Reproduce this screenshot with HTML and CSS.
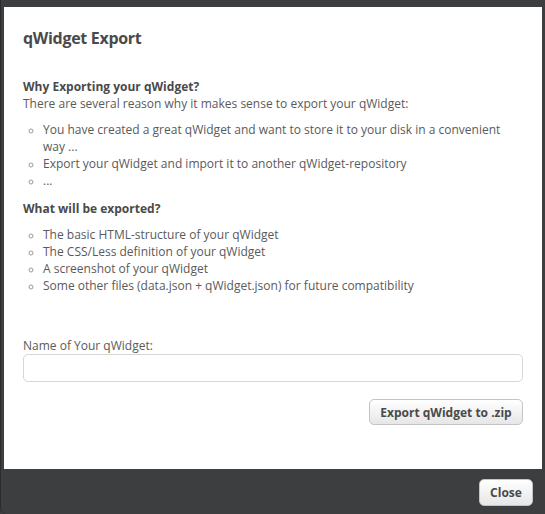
FILE: index.html
```html
<!DOCTYPE html>
<html>
<head>
<meta charset="utf-8">
<link rel="stylesheet" href="styles.css">
</head>
<body>
<div class="frame">
  <div class="modal">
    <h1 class="title">qWidget Export</h1>
    <h2 class="sub">Why Exporting your qWidget?</h2>
    <p class="text">There are several reason why it makes sense to export your qWidget:</p>
    <ul class="list">
      <li>You have created a great qWidget and want to store it to your disk in a convenient way ...</li>
      <li>Export your qWidget and import it to another qWidget-repository</li>
      <li>...</li>
    </ul>
    <h2 class="sub">What will be exported?</h2>
    <ul class="list">
      <li>The basic HTML-structure of your qWidget</li>
      <li>The CSS/Less definition of your qWidget</li>
      <li>A screenshot of your qWidget</li>
      <li>Some other files (data.json + qWidget.json) for future compatibility</li>
    </ul>
    <label class="label">Name of Your qWidget:</label>
    <input class="input" type="text">
    <div class="actions">
      <button class="btn btn-export">Export qWidget to .zip</button>
    </div>
  </div>
  <div class="footer">
    <button class="btn btn-close">Close</button>
  </div>
</div>
</body>
</html>
```
FILE: styles.css
```css
html, body {
  margin: 0;
  padding: 0;
  background: #3d3e40;
}
body {
  font-family: "Open Sans", "Liberation Sans", sans-serif;
  color: #5a5a5a;
}
.frame {
  width: 545px;
  height: 514px;
  box-sizing: border-box;
  padding: 7px 3px 0 3px;
  display: flex;
  flex-direction: column;
  border-left: 1px solid #2b2c2e;
  border-bottom-left-radius: 6px;
}
.modal {
  background: #fff;
  height: 462px;
  box-sizing: border-box;
  padding: 21px 19px 0 19px;
}
.title {
  margin: 0 0 31px 0;
  font-size: 16px;
  font-weight: 700;
  color: #4a4a4a;
  line-height: 20px;
  letter-spacing: -0.3px;
}
.sub {
  margin: 0;
  font-size: 12px;
  font-weight: 700;
  color: #4a4a4a;
  line-height: 16px;
}
.text {
  margin: 0;
  font-size: 12px;
  line-height: 17px;
}
.list {
  margin: 9px 0 12px 0;
  padding-left: 20px;
  list-style: circle;
  font-size: 12px;
  line-height: 17px;
}
.list li::marker {
  color: #999;
  font-size: 10px;
}
.label {
  display: block;
  margin-top: 44px;
  font-size: 12px;
  line-height: 15px;
}
.input {
  display: block;
  width: 100%;
  box-sizing: border-box;
  height: 28px;
  margin-top: 1px;
  border: 1px solid #d6d6d6;
  border-radius: 5px;
  background: #fff;
}
.actions {
  display: flex;
  justify-content: flex-end;
  margin-top: 17px;
}
.btn {
  font-family: "Open Sans", "Liberation Sans", sans-serif;
  font-weight: 700;
  font-size: 12px;
  color: #4a4a4a;
  border: 1px solid #c4c4c4;
  border-radius: 5px;
  background: linear-gradient(#ffffff, #e6e6e6);
  padding: 0;
}
.btn-export {
  width: 154px;
  height: 26px;
}
.footer {
  flex: 1;
  display: flex;
  justify-content: flex-end;
  align-items: flex-start;
  padding: 10px 9px 0 0;
}
.btn-close {
  width: 54px;
  height: 27px;
}
```
